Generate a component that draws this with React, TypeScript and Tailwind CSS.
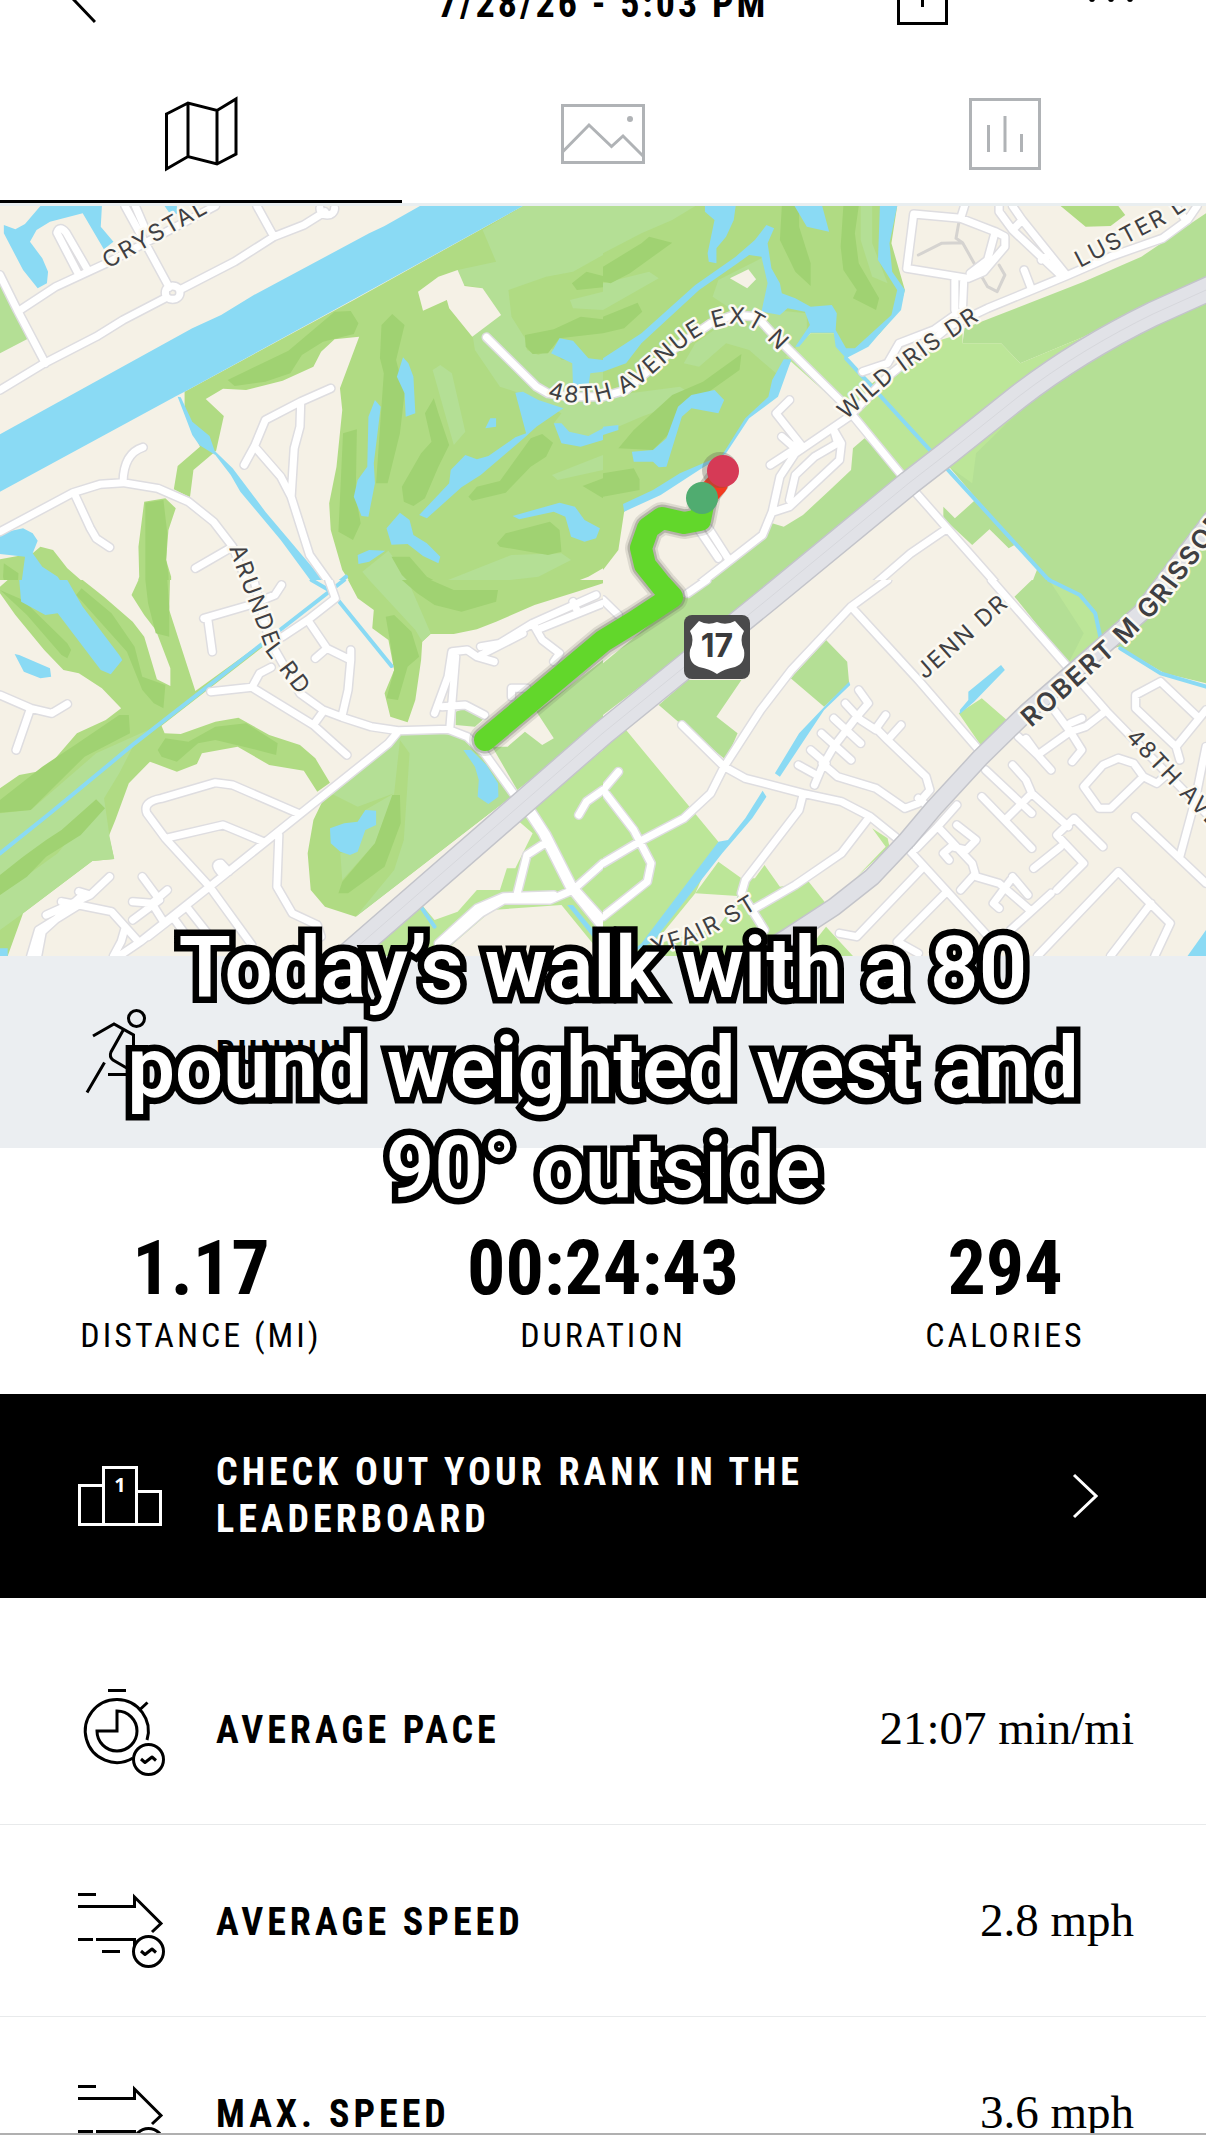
import type { ReactNode } from 'react';

type TileData = {
  x: number;
  y: number;
  park: string;
  lawn: string;
  meadow: string;
  rough: string;
  land: string;
  water: string;
  streams: string;
  roads: string;
  trails?: string;
};

/* Each tile covers 603x400 map units and is drawn on its own 1568x1200 grid */
const tiles: TileData[] = [
  {
    x: 0,
    y: 200,
    park: 'M480 575L920 300L1360 18H1568V1105L1530 1130L1370 1200H940L890 1110L860 990L856 910L875 800L890 630L884 565L934 410L870 418L835 455L815 500L735 542L640 570L580 566L535 597L582 648L562 752L503 810L494 892L452 868L462 798L520 740L480 640Z M375 905L430 895L457 925L438 990L432 1080L445 1130V1200H342L362 1130L360 1040Z M0 1078L85 1060L105 1040L138 1050L175 1105L230 1160L275 1200H0Z',
    lawn: 'M1360 18H1568V165L1490 215L1420 230L1322 270L1330 350L1365 415L1370 450L1400 465L1435 445L1460 480L1568 480V720L1500 735L1440 670L1460 640L1340 575L1300 560L1235 450L1228 400L1300 345L1255 265L1205 255L1190 210L1290 185L1255 90Z M1125 510L1145 495L1175 520L1210 695L1180 735Z M1165 1140L1330 1065L1460 1060L1485 1080L1400 1130L1250 1150Z M942 1115L1010 1052L1060 1130L1120 1200H1005Z M1435 825L1568 765V810L1450 840Z M1482 300L1568 275V330L1490 325Z M0 250L75 415L0 460Z',
    meadow: '',
    rough: 'M592 540L750 452L870 335L912 333L932 370L920 402L840 425L785 465L755 520L690 545L610 558Z M992 375L1020 342L1052 375L1030 480L1052 580L1040 700L1008 850H978L998 520L988 475Z M1105 640L1128 595L1140 640L1168 735L1140 800L1105 895L1075 918L1050 905L1045 860L1095 760L1122 725Z M892 700L928 688L925 890L938 970L918 1020L880 995Z M1218 890L1240 860L1300 843L1380 715L1410 702L1438 728L1420 770L1380 800L1315 878L1228 902Z M1292 1030L1315 1000L1430 965L1455 990L1460 1055L1425 1065L1300 1040Z M1018 1070H1065L1110 1130L1175 1168H1295V1200H1110L1045 1125Z M1365 405L1440 388L1510 350L1568 358V400L1455 415L1425 460L1385 462L1367 440Z M1487 250L1525 215L1568 228V262L1500 270Z M1515 858L1568 835V895Z M378 908L425 900L435 1000L432 1080L438 1120L440 1200H378Z M10 1090L48 1120L45 1200H20L8 1130Z M198 1195L212 1162L250 1200Z',
    land: 'M1087 275L1140 230L1190 210L1208 258L1255 265L1303 345L1228 410L1168 325L1162 300L1100 332Z',
    water: 'M0 703L500 385L575 345L660 285L960 100L1000 78L1092 18H1360L920 298L480 575L455 590L0 875Z M462 590L470 592L500 665L545 708L558 752L605 805L690 935L840 1140L860 1175H845L810 1145L730 1020L625 875L600 825L560 765L518 735L500 705Z M105 18H265L262 80L295 125L270 148L215 40L130 65L95 90L78 125L110 175L125 215L122 250L98 265L60 210L10 100V75L40 88L65 72Z M428 18H460V42L440 38Z M0 1000L60 985L85 1000L98 1022L85 1060L110 1100L150 1130L190 1200H50L65 1070L0 1062Z M1048 472L1062 490L1075 530L1080 640L1055 650L1052 580L1032 530Z M975 600L990 620L972 790L975 850L958 950L940 948L920 890L930 840L955 800L958 650Z M1040 938L1065 960L1075 1005L1110 1030L1145 1070L1140 1090L1100 1068L1060 1032L1018 1034L1005 985Z M930 1065L960 1050L1002 1052L960 1085L932 1092Z M1090 945L1168 850L1172 810L1210 765L1240 778L1270 768L1340 712L1368 700L1340 578L1360 575L1400 600L1465 625L1395 680L1365 712L1250 825L1200 862L1110 955Z M1262 685L1275 655H1290V680Z M1333 948L1455 908L1495 920L1520 960L1560 985L1550 1015L1520 1025L1485 1010L1470 950L1440 935L1350 958Z M1433 460L1455 415L1490 422L1530 475L1568 480V515L1535 520L1530 560H1490L1488 490Z M1440 670H1460L1480 695L1530 708L1568 685V720L1510 740L1460 730Z',
    streams: 'M900 1130L825 1200',
    roads: 'M0 570L115 490L250 410L320 360L430 294M470 268L610 185L712 110L790 75L845 35 M0 225L45 330L118 490 M55 328L145 260L280 188L560 18 M205 225L148 98Q155 75 172 98L228 210 M325 18L345 60L440 262M352 18L375 80 M668 18L712 110 M860 565L782 605L690 660L662 738L635 795M782 605L780 680L765 745L757 890M662 740L730 830L757 890L805 1065L870 1170V1200 M0 995L190 878L260 853L320 848L410 865L490 905L555 965L605 1040L508 1105M605 1040L660 1200 M320 845Q322 760 372 742M195 885L235 985L250 1015L285 1042 M732 1155L715 1190 M1265 412L1395 560L1425 580L1480 590H1568 M430 278a19 20 0 1 0 38 0a19 20 0 1 0 -38 0 M832 25a19 20 0 1 0 38 0 M1520 1190L1568 1172',
  },
  {
    x: 603,
    y: 200,
    park: 'M0 18H765L750 130L785 270L770 330L720 400L632 475L600 400H538L490 480L435 600L370 660L310 770L130 880L55 935L40 1050L0 1110Z M1190 18H1340L1358 45L1320 78L1255 80Z',
    lawn: 'M0 18H240L180 60L100 100L0 160Z M300 240L420 170L440 330L530 340V400L450 520L380 450L320 430L250 500L210 490L240 430L350 340L285 290Z M0 250L120 215L145 235L0 330Z M0 590L200 560L240 590L100 650L0 700Z M670 18H700V130L740 250L700 230L670 120Z M940 385L1250 245L1400 170L1568 40V240L1400 320L1250 410L1085 490L1035 430L935 430Z M1568 310L1250 470L900 800L970 895L1130 1105L1235 1200H1568Z M680 715L780 825L385 1200H220L330 1085L440 970L470 980L520 945L590 870L645 810L650 745Z M885 920L915 955L970 898L1070 1035L1055 1045L1005 988L960 1035L885 955Z M1130 1105L1235 1200H1070L1115 1150Z',
    meadow: 'M475 470L540 400H600L632 475L700 550L820 440L935 400L935 430L1035 430L1085 490L1250 410L1000 640L780 830L680 700L620 620Z M1050 670L1250 470L900 800L960 850L970 760Z',
    rough: 'M0 200L100 130L120 110L180 128L70 220L20 250L0 245Z M465 18H510V80L540 190V258L500 215L460 120Z M625 18H665L655 100L665 190L718 295L710 330L650 295L660 270L625 210L618 140Z M0 350L90 308L102 335L55 385L0 400Z M40 745L80 690L180 585L260 545L360 462L355 510L270 580L205 620L190 680L130 750Z M0 820L80 805L95 838V870L0 890Z',
    land: 'M330 235L378 208L398 238L375 265Z',
    water: 'M265 18H345L340 60L320 110L295 145V190L275 185L272 160L290 60L265 35Z M498 18H570L588 95L530 80Z M720 18H765L745 130L752 215L785 270L775 330L720 400L690 440L632 475L605 440L600 398H540L510 440H500L538 375L525 335L480 325L460 345L412 335L428 250L412 170L380 165L350 190L250 270L100 430L60 490L0 515V475L100 400L240 255L345 170L395 120L425 75L445 85L428 130L438 205L460 250L465 280L500 295L540 320L595 315L608 340L605 390L632 445H655L750 345L765 270L715 180Z M490 478L470 478L440 540L430 590L370 655L310 765L200 820L130 870L52 912L55 935L150 885L250 810L320 760L380 655L455 590Z M75 755L130 750L165 715L195 620L230 585L290 570L315 600L300 640L230 625L205 650L165 800L145 802L130 785L80 785Z M0 680L40 675V690L0 705Z',
    streams: 'M632 475L1155 1135L1235 1200',
    roads: 'M0 590L60 570L180 450L280 370L340 345L400 350L440 400L620 605L780 830M815 880L895 985L1060 1200 M220 1180L415 1005L440 935L460 830L500 760L640 650L740 530L900 380L1000 325L1200 230L1320 170L1455 115L1520 60L1545 18 M675 515L740 490L770 430L860 390L915 345L940 330 M915 330V240M935 320L938 240 M790 205L808 42L930 55L1020 95L1045 110V140L990 215L950 235L790 205M1020 95L1000 180L955 220M930 55L940 18 M1030 18V35L1065 90L1185 220M1065 18L1090 60L1205 225M1065 90L1090 60M1140 180L1160 165 M1095 210L1115 270 M485 600L450 640L515 735M435 795L515 735H490L465 710 M600 690L620 730L615 780L485 920L445 935M600 690L610 730L550 770L500 825L485 900 M250 990L300 1075M275 985L325 1075 M895 985L800 1060L660 1200 M1490 18L1515 60',
    trails: 'M820 165L880 130L935 128L970 200L1000 260L1025 275L1045 225L1030 195 M925 70L918 115L935 128',
  },
  {
    x: 0,
    y: 580,
    park: 'M0 20L20 0H215L270 50L345 125L375 170L408 298L443 318V265L405 150L375 105L342 45L360 0H442L440 90L508 333L685 185L690 195L420 437L428 460L470 462L560 425L620 413L700 465L780 495L820 535L858 608L825 635L790 572L700 555L618 500L525 520L512 552L460 575L390 545L335 610L300 720L283 768L297 837L240 843L60 1000L20 1128H0V625L50 585L95 575L140 540L200 460L275 420L315 385L265 325L205 280L165 270L115 210L40 105L0 40Z M905 0H1568V10L1500 35L1390 75L1290 125L1240 148L1180 162H1120L1098 185L1095 240L1080 360L1060 427L1015 410L1000 340L1025 270L1010 180L968 145L972 90L930 55Z M1030 462H1150L1210 470L1230 490L1340 640L925 1010L845 980L808 930L800 820L815 720L840 660Z',
    lawn: 'M0 700L80 690L250 520L385 450L350 490L310 580L265 665L100 830L0 900Z M0 945L150 820L270 650L285 770L297 837L240 843L60 1000L0 1050Z M960 0H1060L1120 160L1098 185L1080 150Z M1030 462H1150L1210 470L1230 490L1340 640L925 1010L1025 870L1050 780L1065 520L1040 480L1025 640L930 680L860 640Z M1185 395L1210 385L1260 415L1235 440L1185 435Z M1280 500H1320L1365 455L1410 495L1440 475L1395 395L1568 240V430L1345 630Z M885 820L935 800L975 790L890 900Z M950 690L1025 640L975 790L930 815Z',
    meadow: 'M920 1128L1090 965L1130 1020L1190 995L1240 930H1300L1318 865H1340L1385 760L1345 720L1568 510V1128L1460 975L1280 990L1180 1090L1150 1128Z',
    rough: 'M0 30L60 60L175 190L185 210L175 235L160 225L70 105Z M198 45L212 25L290 100L350 200L370 290L430 315L425 385L400 370L370 330L330 215Z M378 0H435L440 80V170L405 160L385 70Z M0 660L110 560L195 495L310 405H335L338 460L220 530L80 690L0 698Z M0 885L60 830L120 780L160 750L250 658L273 685L210 765L120 830L70 890L0 945Z M410 510L430 475L490 485L560 440L640 430L722 490L718 525L650 505L560 480L515 490L460 545L420 530Z M1045 0H1120L1180 30H1295L1290 65L1200 95L1130 75L1085 40Z M1003 110L1025 105L1070 155L1090 230L1060 260L1035 360L1005 355L1025 270L1015 190Z M1020 645H1040L1042 730L1000 860L905 940H880L890 905L975 790Z',
    land: '',
    water: 'M50 0H175L215 80L310 225L318 240L288 283L262 270L150 100L118 105L55 65Z M38 222L50 225L130 265L133 290L105 295L62 275Z M858 745L895 730L930 725L950 690L978 692V735L950 750L930 815L910 825L885 815L860 790Z M1205 510H1225L1265 555L1295 610L1296 650L1270 672L1242 650L1245 600L1235 560Z M0 1105H20V1128H0Z M1475 975H1490L1568 1085V1110Z',
    streams: 'M895 0L350 490L130 700L0 820 M875 55L1018 258 M1340 720L1165 890M1135 915L1085 965L1130 1040 M810 0L855 30',
    roads: 'M855 0L872 55L800 120L735 170 M530 115L650 75L715 45L732 15M540 115L552 215 M0 345L80 385L135 400L175 372M78 390L42 510 M800 120L850 205L912 240L905 330L890 405M912 240V210M850 205L820 235 M548 335L655 322L815 435L902 525M655 322L675 280L705 262M815 435L840 395 M660 0L700 180L720 220L780 340L840 390L890 412L965 440L1035 452L1165 448L1215 470L1260 520L1335 640 M1035 455L1010 490L545 920L365 1085L310 1128 M775 700L605 615L560 608L420 655Q370 665 382 700L430 775L545 920L655 1095M430 775L580 735L685 785 M725 765L720 920L760 1000L825 1035L835 1070 M580 885Q550 850 575 850L595 875 M285 890L235 945L205 935M235 945L120 1005M160 965L205 975L290 995L360 1085M205 975L100 1050L80 1128M205 955L110 1055L98 1128M325 1045L315 1085L295 1128 M370 890L415 960L345 1020M435 930L395 970L345 965M395 970L425 1025M485 980L385 1070M485 980L540 1060M455 1020L480 1060 M1130 400L1165 290L1175 215L1215 210L1240 230L1285 245M1185 230L1170 440M1150 380L1210 375L1260 405 M1250 200L1300 190L1385 130L1550 45M1250 225L1360 160M1395 150L1568 70M1385 130L1410 180L1455 220L1440 245M1490 65L1500 90M1330 350V325H1370 M1370 690L1410 760L1480 920L1568 1045M1380 690L1422 765L1490 920L1568 1020 M1410 795L1370 825L1345 940 M1150 1100L1250 1000L1310 960H1430L1490 930L1568 850M1140 1090L1240 985L1310 950L1440 945 M1505 705L1525 665L1568 630',
  },
  {
    x: 603,
    y: 580,
    park: '',
    lawn: 'M0 250L220 40L270 0H460L0 405Z M145 375L220 300H360L295 410L350 460L320 540L200 430Z M580 180L635 245L640 310L575 380L488 295Z M1115 0H1568V310L1460 280L1340 200L1210 250L1070 50Z',
    meadow: 'M0 500L60 450L300 785L240 940L345 950L330 1000L170 1128H0Z M240 940L300 845L360 895H395L420 855L460 920L535 905L578 968L470 1050L400 1128H130L250 1000Z M580 1040L650 1128H520Z M700 745L740 775L745 800L660 890L735 800Z M925 400L985 355L1050 420L985 500Z M1160 0L1240 45L1280 100L1295 180L1210 250L1250 160Z',
    rough: '',
    land: 'M0 0H70L125 60L90 95L0 120Z M240 940L350 948L340 975L300 1040L130 1095Z',
    water: 'M640 305L643 315L575 390L460 590L447 580L510 460L580 375Z M415 632L425 650L388 715L310 820L130 1085L60 1128L100 1090L300 785L325 780L370 715Z M1035 255L1045 270L965 365L928 402V390L950 360V335Z M1520 1128L1568 1050V1128Z',
    streams: 'M1160 0L1240 45L1280 100L1295 180M1345 205L1450 280L1568 320',
    roads: 'M0 60L40 105 M740 0L645 80L490 270L410 390L315 560L280 640L210 715L95 785L0 850 M220 40L270 0 M205 435L315 560L370 595L520 640L620 665L695 710L770 780 M645 80L820 300L985 520M800 815L1010 1080 M1010 0L1200 250L1310 395L1568 700 M40 575L0 630L80 750L125 850L115 905L0 1010 M520 645L510 690L370 900L360 940L420 1050M395 985L500 915L620 820L690 715 M665 330L690 370L660 410L600 500L570 560L550 615M630 370L670 420L710 450M735 405L710 445L740 480L840 590L850 630L820 670L785 685L710 625L610 590L570 550M775 435L740 480M600 415L670 490M568 460L645 540M540 510L580 550M508 555L555 585 M820 655L850 685 M1170 385L1215 455L1130 525L1165 570M1080 470L1130 525M1100 475L1125 515M1215 455L1245 510L1220 545M1305 395L1255 440L1215 455M1215 430L1245 415 M995 570L1115 700M1065 555L1100 600L1115 640L1050 715M985 650L1115 805M1115 640L1210 740M1300 800L1225 715L1180 765L1250 850L1180 930M1190 800L1120 865 M815 805L870 740L920 675M870 740L960 850L970 890L1030 910L1110 990M920 735L970 780L945 810L905 800L885 820L900 840M1065 890L1105 945M1060 900L1015 970L1030 985M1165 940L1060 1050M965 885L930 930 M830 865L660 1070L615 1060M890 940L765 1085L820 1120 M1130 1128L1340 875L1475 1030L1435 1128M1425 970L1320 1128 M1550 415L1450 305L1385 345V385L1490 500L1568 390M1490 500L1500 540 M1250 620L1300 555L1340 535L1380 550L1405 590L1320 685H1290ZM1405 590L1440 610L1470 580 M1385 710L1568 910M1500 830L1540 660L1568 500',
  },
];

const labels = [
  { id: 'crystal', d: 'M108 269L260 183', text: 'CRYSTAL' },
  { id: 'avenue', d: 'M547 397C590 411 622 399 648 378C681 350 700 327 733 324C757 323 764 338 796 368', text: '48TH AVENUE EXT N' },
  { id: 'iris', d: 'M846 420L890 382L940 346L1010 300', text: 'WILD IRIS DR' },
  { id: 'luster', d: 'M1080 268L1165 224L1230 180', text: 'LUSTER L' },
  { id: 'arundel', d: 'M229 548L246 595L268 655L336 745', text: 'ARUNDEL RD' },
  { id: 'jenn', d: 'M925 680L1030 587', text: 'JENN DR' },
  { id: 'mayfair', d: 'M654 955L695 942L728 926L790 888', text: 'YFAIR ST' },
  { id: 'ave', d: 'M1125 738L1230 848', text: '48TH AVE' },
];

function Tile({ tile }: { tile: TileData }) {
  return (
    <svg x={tile.x} y={tile.y} width="603" height="400" viewBox="0 0 1568 1200" preserveAspectRatio="none">
      <rect width="1568" height="1200" fill="#f5f1e6" />
      <path d={tile.park} fill="#b0db83" />
      <path d={tile.lawn} fill="#b4df95" />
      <path d={tile.meadow} fill="#bce698" />
      <path d={tile.rough} fill="#a0d272" />
      <path d={tile.land} fill="#f5f1e6" />
      <path d={tile.water} fill="#8adaf4" />
      <g fill="none" strokeLinecap="round" strokeLinejoin="round" className="[&>path]:[vector-effect:non-scaling-stroke]">
        <path d={tile.streams} stroke="#8adaf4" strokeWidth="4" />
        {tile.trails && <path d={tile.trails} stroke="#d5d3d0" strokeWidth="3" />}
        <path d={tile.roads} stroke="#dedde0" strokeWidth="10" />
        <path d={tile.roads} stroke="#ffffff" strokeWidth="7" />
      </g>
    </svg>
  );
}

function RouteMap() {
  const highway = 'M348 955L603 733L768 599L909 483L949 452L1018 397C1062 363 1110 335 1153 314L1215 286';
  const grissom = 'M750 960L788 937L834 907L872 877L907 840L934 808L980 758L1026 713L1141 613L1215 515';
  const route = 'M485 740L603 641L634 622L672 597L661 585L645 565L641 548L648 528L662 518L684 523L700 520L704 500';

  return (
    <svg className="block w-full" viewBox="0 206 1206 750" role="img" aria-label="Route map">
      {tiles.map((tile) => (
        <Tile key={`${tile.x}-${tile.y}`} tile={tile} />
      ))}

      {/* Main roads */}
      <g fill="none" strokeLinejoin="round">
        <path d={grissom} stroke="#c3c4ca" strokeWidth="19" />
        <path d={grissom} stroke="#e0e1e6" strokeWidth="16" />
        <path d={highway} stroke="#c3c4ca" strokeWidth="26" />
        <path d={highway} stroke="#e1e2e7" strokeWidth="23" />
        <path d={highway} stroke="#d6d7dc" strokeWidth="1" />
      </g>

      {/* Street names */}
      <g className="font-['Inter',sans-serif] text-[23px] tracking-[2px]" fill="#3f3f42" stroke="#fbf9f2" strokeWidth="5" strokeLinejoin="round" paintOrder="stroke">
        {labels.map((label) => (
          <g key={label.id}>
            <path id={label.id} d={label.d} fill="none" stroke="none" />
            <text>
              <textPath href={`#${label.id}`}>{label.text}</textPath>
            </text>
          </g>
        ))}
        <path id="grissom" d="M1031 728L1128 642L1165 603L1270 464" fill="none" stroke="none" />
        <text className="text-[26px] font-semibold">
          <textPath href="#grissom">ROBERT M GRISSOM</textPath>
        </text>
      </g>

      {/* Highway shield */}
      <rect x="684" y="615" width="66" height="64" rx="8" fill="#4a4a4b" />
      <path d="M699 621Q708 626 717 622Q726 626 735 621L744 631Q739 640 744 650Q746 663 735 667Q724 669 717 674Q710 669 699 667Q688 663 690 650Q695 640 690 631Z" fill="#ffffff" />
      <text x="717" y="657" textAnchor="middle" fill="#3a3a3c" className="font-['Inter',sans-serif] text-[32px] font-bold">17</text>

      {/* Walked route */}
      <g fill="none" strokeLinecap="round" strokeLinejoin="round">
        <path d={route} stroke="#5a5a50" strokeOpacity="0.15" strokeWidth="32" />
        <path d={route} stroke="#5a5a50" strokeOpacity="0.3" strokeWidth="27" />
        <path d="M706 496L717 481" stroke="#5a5a50" strokeOpacity="0.3" strokeWidth="26" />
        <path d={route} stroke="#62d72b" strokeWidth="22" />
        <path d="M706 496L717 484" stroke="#f23a20" strokeWidth="22" />
      </g>
      <circle cx="720" cy="470" r="18" fill="#5a5a50" fillOpacity="0.3" />
      <circle cx="723" cy="471" r="16" fill="#d63a56" />
      <circle cx="702" cy="498" r="16" fill="#50ac70" />
    </svg>
  );
}

function StatIcon({ children }: { children: ReactNode }) {
  return (
    <svg className="h-[88px] w-[88px] shrink-0 overflow-visible" viewBox="0 0 88 88" fill="none" stroke="currentColor" strokeWidth="3" aria-hidden="true">
      {children}
    </svg>
  );
}

function AverageBadge() {
  return (
    <>
      <circle cx="70.5" cy="74.5" r="15" fill="#ffffff" />
      <path d="M63 74L67 77.500L74 72L78 75.500" strokeLinejoin="round" />
    </>
  );
}

function PaceIcon() {
  return (
    <StatIcon>
      <path d="M30 5.500H48M62 24.500L69.500 17.500" />
      <path d="M69 55A31.500 31.500 0 1 0 55 73" />
      <path d="M39 26A20 20 0 1 1 19 46H39Z" />
      <AverageBadge />
    </StatIcon>
  );
}

function SpeedIcon() {
  return (
    <StatIcon>
      <path d="M0 17.500H18M0 29.500H56.500V20L83 46.500L74 55M0 62.500H15M18 62.500H56.500V71M24 74.500H42" />
      <AverageBadge />
    </StatIcon>
  );
}

const summary = [
  { value: '1.17', label: 'DISTANCE (MI)' },
  { value: '00:24:43', label: 'DURATION' },
  { value: '294', label: 'CALORIES' },
];

const details = [
  { label: 'AVERAGE PACE', value: '21:07 min/mi', icon: <PaceIcon /> },
  { label: 'AVERAGE SPEED', value: '2.8 mph', icon: <SpeedIcon /> },
  { label: 'MAX. SPEED', value: '3.6 mph', icon: <SpeedIcon /> },
];

export default function App() {
  return (
    <div className="h-screen overflow-hidden bg-white font-['Roboto_Condensed','Liberation_Sans_Narrow','Liberation_Sans',sans-serif] text-black">
      {/* Header, scrolled half out of view */}
      <header className="-mt-12 grid h-24 grid-cols-[1fr_auto_1fr] items-center px-[72px]">
        <button type="button" aria-label="Back">
          <svg className="h-12 w-6" viewBox="0 0 24 48" fill="none" stroke="currentColor" strokeWidth="3">
            <path d="M23 2L2 24L23 46" />
          </svg>
        </button>
        <h1 className="pt-2 text-[38px] font-bold tracking-[3px]">7/28/26 - 5:03 PM</h1>
        <div className="flex items-center justify-end gap-[140px]">
          <button type="button" aria-label="Share">
            <svg className="h-[50px] w-[51px]" viewBox="0 0 51 50" fill="none" stroke="currentColor" strokeWidth="3">
              <path d="M15 8H1.500V48.500H49.500V8H36M25.500 0V32" />
            </svg>
          </button>
          <button type="button" aria-label="More">
            <svg className="h-2 w-[46px]" viewBox="0 0 46 8" fill="currentColor">
              <circle cx="4" cy="3" r="3" />
              <circle cx="23" cy="3" r="3" />
              <circle cx="42" cy="3" r="3" />
            </svg>
          </button>
        </div>
      </header>

      {/* Tabs */}
      <nav className="grid h-[158px] grid-cols-3 border-b-3 border-[#e9eef0] text-[#b0b3b6]">
        <button type="button" aria-label="Map" className="flex items-center justify-center border-b-3 border-black pt-5 text-black">
          <svg className="h-[76px] w-[76px]" viewBox="0 0 76 76" fill="none" stroke="currentColor" strokeWidth="3">
            <path d="M3.500 18L25 7L54 14.500L73 3V58L54 68L25 60.500L3.500 73ZM25 7V60.500M54 14.500V68" />
          </svg>
        </button>
        <button type="button" aria-label="Photos" className="flex items-center justify-center border-b-3 border-transparent pt-5">
          <svg className="h-[60px] w-[84px]" viewBox="0 0 84 60" fill="none" stroke="currentColor" strokeWidth="3">
            <rect x="1.5" y="1.5" width="81" height="57" />
            <path d="M2 47.500L28 21L50.500 42.500L62 32L82 52" />
            <circle cx="69" cy="15" r="3" fill="currentColor" stroke="none" />
          </svg>
        </button>
        <button type="button" aria-label="Charts" className="flex items-center justify-center border-b-3 border-transparent pt-5">
          <svg className="h-[72px] w-[72px]" viewBox="0 0 72 72" fill="none" stroke="currentColor" strokeWidth="3">
            <rect x="1.5" y="1.5" width="69" height="69" />
            <path d="M19.500 27V54M36 18V54M52.500 36V54" />
          </svg>
        </button>
      </nav>

      <RouteMap />

      {/* Activity */}
      <section className="relative flex h-48 items-center gap-[50px] bg-[#ebeef1] px-[78px]">
        <StatIcon>
          <circle cx="58.5" cy="10.5" r="8" />
          <path d="M15 28L36 16L55.500 27V42M45 22.500L33 44Q31 49 35 52L53 62.500M30 66.500H56M26.500 54.500L9 84.500" />
        </StatIcon>
        <h2 className="text-[34px] font-bold tracking-[3px]">RUNNING</h2>
        <p className="absolute inset-x-0 -top-[38px] z-10 text-center font-['Roboto',sans-serif] text-[85px] leading-[100px] font-semibold text-white [-webkit-text-stroke:13px_black] [paint-order:stroke_fill]">
          <span className="block">Today’s walk with a 80</span>
          <span className="block">pound weighted vest and</span>
          <span className="block">90° outside</span>
        </p>
      </section>

      {/* Summary */}
      <dl className="grid grid-cols-3 pt-20 pb-8 text-center">
        {summary.map((item) => (
          <div key={item.label} className="flex flex-col-reverse">
            <dt className="text-[34px] leading-[54px] tracking-[3px]">{item.label}</dt>
            <dd className="text-[76px] leading-[80px] font-bold">{item.value}</dd>
          </div>
        ))}
      </dl>

      <a href="#leaderboard" className="flex h-[204px] items-center bg-black pr-[108px] pl-[78px] text-white">
        <StatIcon>
          <path d="M25.500 33.500H1.500V72.500H82.500V39.500H58.500M25.500 72.500V15.500H58.500V72.500" />
          <text x="42" y="40" textAnchor="middle" fill="currentColor" stroke="none" className="font-['Open_Sans',sans-serif] text-xl font-bold">1</text>
        </StatIcon>
        <span className="ml-[50px] max-w-[640px] flex-1 text-[38px] leading-[47px] font-bold tracking-[4px]">
          CHECK OUT YOUR RANK IN THE LEADERBOARD
        </span>
        <svg className="ml-auto h-[46px] w-[26px]" viewBox="0 0 26 46" fill="none" stroke="currentColor" strokeWidth="3" aria-hidden="true">
          <path d="M2 2L24 23L2 44" />
        </svg>
      </a>

      {/* Details */}
      <dl className="pt-[35px]">
        {details.map((item) => (
          <div key={item.label} className="flex h-48 items-center border-b border-[#e8eaeb] pr-[72px] pl-[78px]">
            {item.icon}
            <dt className="ml-[50px] flex-1 pt-1 text-[38px] font-bold tracking-[4px]">{item.label}</dt>
            <dd className="font-['Liberation_Serif',serif] text-[47px]">{item.value}</dd>
          </div>
        ))}
      </dl>

      <footer className="fixed inset-x-0 bottom-0 h-[11px] border-t-2 border-[#b0b0b0] bg-white" />
    </div>
  );
}
